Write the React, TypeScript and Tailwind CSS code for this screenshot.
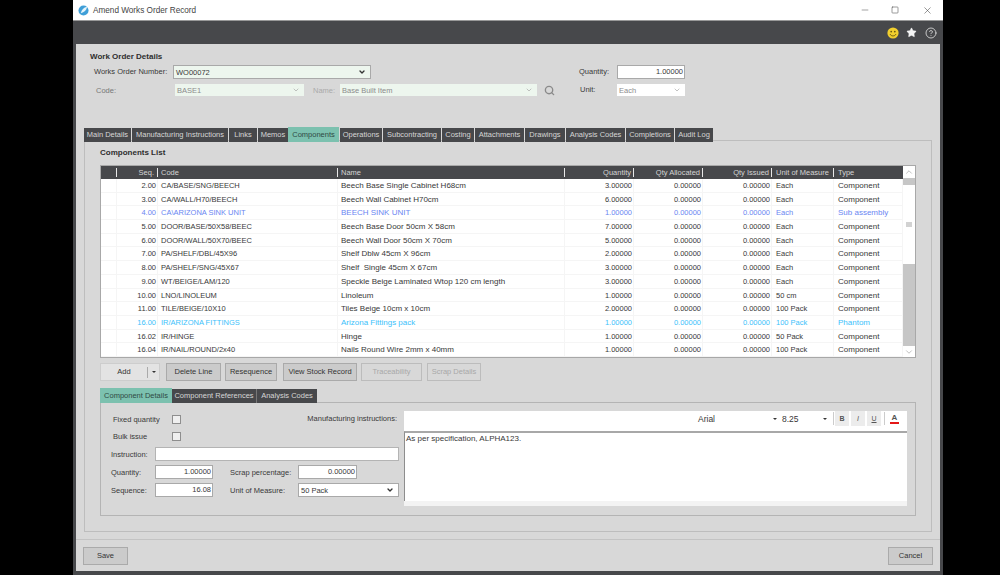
import { ChevronDown, ChevronUp, CircleHelp, Minus, Search, Square, Star, X } from "lucide-react"
import clsx from "clsx"

const topTabs = [
  { label: "Main Details", width: "w-[47px]" },
  { label: "Manufacturing Instructions", width: "w-[96px]" },
  { label: "Links", width: "w-[28px]" },
  { label: "Memos", width: "w-[30px]" },
  { label: "Components", width: "w-[51px]", active: true },
  { label: "Operations", width: "w-[42px]" },
  { label: "Subcontracting", width: "w-[58px]" },
  { label: "Costing", width: "w-[32px]" },
  { label: "Attachments", width: "w-[49px]" },
  { label: "Drawings", width: "w-[40px]" },
  { label: "Analysis Codes", width: "w-[59px]" },
  { label: "Completions", width: "w-[48px]" },
  { label: "Audit Log", width: "w-[38px]" },
]

type Row = { seq: string; code: string; name: string; qty: string; uom: string; type: string; tone?: "blue" | "cyan" }

const rows: Row[] = [
  { seq: "2.00", code: "CA/BASE/SNG/BEECH", name: "Beech Base Single Cabinet H68cm", qty: "3.00000", uom: "Each", type: "Component" },
  { seq: "3.00", code: "CA/WALL/H70/BEECH", name: "Beech Wall Cabinet H70cm", qty: "6.00000", uom: "Each", type: "Component" },
  { seq: "4.00", code: "CA\\ARIZONA SINK UNIT", name: "BEECH SINK UNIT", qty: "1.00000", uom: "Each", type: "Sub assembly", tone: "blue" },
  { seq: "5.00", code: "DOOR/BASE/50X58/BEEC", name: "Beech Base Door 50cm X 58cm", qty: "7.00000", uom: "Each", type: "Component" },
  { seq: "6.00", code: "DOOR/WALL/50X70/BEEC", name: "Beech Wall Door 50cm X 70cm", qty: "5.00000", uom: "Each", type: "Component" },
  { seq: "7.00", code: "PA/SHELF/DBL/45X96", name: "Shelf Dblw 45cm X 96cm", qty: "2.00000", uom: "Each", type: "Component" },
  { seq: "8.00", code: "PA/SHELF/SNG/45X67", name: "Shelf  Single 45cm X 67cm", qty: "3.00000", uom: "Each", type: "Component" },
  { seq: "9.00", code: "WT/BEIGE/LAM/120", name: "Speckle Beige Laminated Wtop 120 cm length", qty: "3.00000", uom: "Each", type: "Component" },
  { seq: "10.00", code: "LNO/LINOLEUM", name: "Linoleum", qty: "1.00000", uom: "50 cm", type: "Component" },
  { seq: "11.00", code: "TILE/BEIGE/10X10", name: "Tiles Beige 10cm x 10cm", qty: "2.00000", uom: "100 Pack", type: "Component" },
  { seq: "16.00", code: "IR/ARIZONA FITTINGS", name: "Arizona Fittings pack", qty: "1.00000", uom: "100 Pack", type: "Phantom", tone: "cyan" },
  { seq: "16.02", code: "IR/HINGE", name: "Hinge", qty: "1.00000", uom: "50 Pack", type: "Component" },
  { seq: "16.04", code: "IR/NAIL/ROUND/2x40", name: "Nails Round Wire 2mm x 40mm", qty: "1.00000", uom: "100 Pack", type: "Component" },
]

const gridCols = "grid grid-cols-[16px_41px_180px_227px_69px_69px_69px_62px_69px]"

function Combo({ value, width, tint, disabled }: { value: string; width: string; tint?: boolean; disabled?: boolean }) {
  return (
    <div
      className={clsx(
        "flex items-center justify-between pl-[2px] pr-[4px]",
        width,
        tint ? "bg-[#edf6ee]" : "bg-white",
        disabled ? "h-[12px] text-[#8c8c8c]" : "h-[14px] border border-[#a9a9a9]",
      )}
    >
      <span className="pt-px">{value}</span>
      <ChevronDown size={8} strokeWidth={disabled ? 2 : 4} className={disabled ? "text-[#a5a5a5]" : "text-[#333]"} />
    </div>
  )
}

function NumberBox({ value, width = "w-[58px]" }: { value: string; width?: string }) {
  return <div className={clsx("h-[14px] border border-[#a9a9a9] bg-white pr-px text-right leading-[12px]", width)}>{value}</div>
}

function ActionButton({ label, width, disabled, className }: { label: string; width: string; disabled?: boolean; className?: string }) {
  return (
    <div
      className={clsx(
        "flex h-[18px] items-center justify-center border",
        width,
        disabled ? "border-[#bcbcbc] text-[#a8a8a8]" : "border-[#aaaaaa] bg-[#cbcbcb] text-[#333]",
        className,
      )}
    >
      {label}
    </div>
  )
}

function Caret() {
  return <span className="h-0 w-0 border-x-[2px] border-t-[2px] border-x-transparent border-t-[#333]" />
}

function FormatButton({ children }: { children: React.ReactNode }) {
  return <div className="flex h-[15px] w-[14px] items-center justify-center bg-[#ececec] text-[7px] text-[#555]">{children}</div>
}

export default function App() {
  return (
    <div className="h-[575px] w-[1000px] overflow-hidden bg-black pl-[73px] font-['Liberation_Sans',Arial,sans-serif] text-[7.5px] leading-[10px] text-[#383838]">
      <div className="flex h-full w-[870px] flex-col bg-[#47484b] pb-[4px] pl-[3px] pr-[3px]">
        {/* window chrome */}
        <div className="-mx-[3px] flex h-[21px] shrink-0 items-center border-b border-[#999] bg-white pl-[5px] text-[8.2px] text-[#444]">
          <svg width="11" height="11" viewBox="0 0 12 12" className="mr-[4px]">
            <circle cx="6" cy="6" r="5.5" fill="#3f9fd8" />
            <path d="M3 9 C4 5 6 3 10 2 C9 6 7 8 3 9 Z" fill="#e6f5fb" />
          </svg>
          <span className="pt-px">Amend Works Order Record</span>
          <div className="ml-auto flex items-center text-[#444]">
            <Minus size={10} strokeWidth={1.2} className="mr-[21px]" />
            <Square size={8} strokeWidth={1.6} className="mr-[23px]" />
            <X size={11} strokeWidth={1.2} className="mr-[10px]" />
          </div>
        </div>
        <div className="flex h-[23px] shrink-0 items-center justify-end pr-[3px]">
          <svg width="12" height="12" viewBox="0 0 12 12" className="mr-[7px]">
            <circle cx="6" cy="6" r="5.6" fill="#f2cf2e" />
            <circle cx="4.2" cy="4.6" r="0.9" fill="#6b5a10" />
            <circle cx="7.8" cy="4.6" r="0.9" fill="#6b5a10" />
            <path d="M3 7 C4 9.6 8 9.6 9 7" stroke="#6b5a10" strokeWidth="0.9" fill="none" />
          </svg>
          <Star size={11} fill="#f4f4f4" strokeWidth={1} className="mr-[8px] text-[#f4f4f4]" />
          <CircleHelp size={12} strokeWidth={1.6} className="text-[#e4e4e4]" />
        </div>

        {/* form body */}
        <div className="flex min-h-0 flex-1 flex-col bg-[#d8d8d8]">
          <div className="h-[83px] shrink-0 pt-[8px]">
            <div className="ml-[14px] text-[8px] font-bold text-[#2e2e2e]">Work Order Details</div>
            <div className="mt-[3px] flex">
              <div className="w-[503px]">
                <div className="flex h-[14px] items-center pl-[18px]">
                  <span className="w-[79px]">Works Order Number:</span>
                  <Combo value="WO00072" width="w-[198px]" tint />
                </div>
                <div className="mt-[5px] flex h-[12px] items-center pl-[20px] text-[#777]">
                  <span className="w-[79px] pt-px">Code:</span>
                  <Combo value="BASE1" width="w-[129px]" tint disabled />
                  <span className="ml-[9px] w-[27px] pt-px text-[#aaa]">Name:</span>
                  <Combo value="Base Built Item" width="w-[197px]" tint disabled />
                  <Search size={11} strokeWidth={3} className="ml-[7px] text-[#8a8a8a]" />
                </div>
              </div>
              <div>
                <div className="flex h-[14px] items-center">
                  <span className="w-[38px]">Quantity:</span>
                  <NumberBox value="1.00000" width="w-[68px]" />
                </div>
                <div className="mt-[5px] flex h-[12px] items-center">
                  <span className="ml-px w-[37px]">Unit:</span>
                  <Combo value="Each" width="w-[68px]" disabled />
                </div>
              </div>
            </div>
          </div>

          {/* main tabs */}
          <div className="relative z-10 flex h-[15px] shrink-0 items-end gap-px pl-[8px]">
            {topTabs.map((tab) => (
              <div
                key={tab.label}
                className={clsx(
                  "flex items-center justify-center whitespace-nowrap",
                  tab.width,
                  tab.active ? "-ml-px h-[15px] bg-[#7cc1af] text-[#2f4a44]" : "h-[14px] bg-[#47484b] text-[#d6d6d6]",
                )}
              >
                {tab.label}
              </div>
            ))}
          </div>

          <div className="-mt-[2px] ml-[8px] mr-[8px] h-[392px] shrink-0 border border-[#bdbdbd] pl-[15px] pr-[15px]">
            <div className="mt-[7px] text-[8px] font-bold text-[#2e2e2e]">Components List</div>

            <div className="mt-[7px] flex h-[193px] w-[816px] border border-[#a8a8a8] bg-white">
              <div className="w-[802px]">
                <div className={clsx(gridCols, "h-[13px] items-center bg-[#47484b] text-[#d4d4d4]")}>
                  <span className="h-[9px] border-r border-[#e8e8e8]" />
                  <span className="flex h-[9px] items-center justify-end border-r border-[#e8e8e8] pr-[3px]">Seq.</span>
                  <span className="flex h-[9px] items-center border-r border-[#e8e8e8] pl-[3px]">Code</span>
                  <span className="flex h-[9px] items-center border-r border-[#e8e8e8] pl-[3px]">Name</span>
                  <span className="flex h-[9px] items-center justify-end border-r border-[#e8e8e8] pr-[2px]">Quantity</span>
                  <span className="flex h-[9px] items-center justify-end border-r border-[#e8e8e8] pr-[2px]">Qty Allocated</span>
                  <span className="flex h-[9px] items-center justify-end border-r border-[#e8e8e8] pr-[2px]">Qty Issued</span>
                  <span className="flex h-[9px] items-center border-r border-[#e8e8e8] pl-[4px]">Unit of Measure</span>
                  <span className="flex h-[9px] items-center pl-[4px]">Type</span>
                </div>
                {rows.map((row) => (
                  <div
                    key={row.seq}
                    className={clsx(
                      gridCols,
                      "h-[13.7px] items-stretch border-b border-[#f5f5f5] leading-[13px] [&>span]:border-r [&>span]:border-[#f5f5f5]",
                      row.tone === "blue" && "text-[#6a86f2]",
                      row.tone === "cyan" && "text-[#3cc1fb]",
                    )}
                  >
                    <span />
                    <span className="pr-px text-right">{row.seq}</span>
                    <span className="whitespace-nowrap pl-[3px]">{row.code}</span>
                    <span className="whitespace-pre pl-[3px] text-[8px]">{row.name}</span>
                    <span className="pr-px text-right">{row.qty}</span>
                    <span className="pr-px text-right">0.00000</span>
                    <span className="pr-px text-right">0.00000</span>
                    <span className="pl-[4px]">{row.uom}</span>
                    <span className="pl-[4px] text-[8px]">{row.type}</span>
                  </div>
                ))}
              </div>
              {/* scrollbar */}
              <div className="flex w-[12px] flex-col bg-[#c6c6c6]">
                <div className="flex h-[12px] items-center justify-center bg-white">
                  <ChevronUp size={10} strokeWidth={1.6} className="text-[#a0a0a0]" />
                </div>
                <div className="mt-[7px] flex h-[79px] items-center justify-center bg-white">
                  <span className="h-[5px] w-[6px] bg-[#d2d2d2]" />
                </div>
                <div className="mt-auto flex h-[11px] items-center justify-center bg-white">
                  <ChevronDown size={10} strokeWidth={1.6} className="text-[#a0a0a0]" />
                </div>
              </div>
            </div>

            {/* grid actions */}
            <div className="mt-[5px] flex h-[18px] items-center">
              <div className="flex h-[18px] w-[60px] items-center border border-[#cdcdcd] bg-[#e3e3e3] text-[#333]">
                <span className="w-[46px] text-center">Add</span>
                <span className="flex h-[11px] flex-1 items-center justify-center border-l border-[#aaa]">
                  <Caret />
                </span>
              </div>
              <ActionButton label="Delete Line" width="w-[55px]" className="ml-[6px]" />
              <ActionButton label="Resequence" width="w-[52px]" className="ml-[4px]" />
              <ActionButton label="View Stock Record" width="w-[74px]" className="ml-[6px]" />
              <ActionButton label="Traceability" width="w-[61px]" disabled className="ml-[4px]" />
              <ActionButton label="Scrap Details" width="w-[54px]" disabled className="ml-[5px]" />
            </div>

            {/* detail tabs */}
            <div className="relative z-10 mt-[7px] flex h-[15px] items-end whitespace-nowrap">
              <div className="flex h-[15px] w-[72px] items-center justify-center bg-[#7cc1af] text-[#2f4a44]">Component Details</div>
              <div className="flex h-[14px] w-[85px] items-center justify-center border-r border-[#777] bg-[#47484b] text-[#d6d6d6]">Component References</div>
              <div className="flex h-[14px] w-[60px] items-center justify-center bg-[#47484b] text-[#d6d6d6]">Analysis Codes</div>
            </div>

            <div className="-mt-px flex h-[114px] w-[816px] border border-[#b4b4b4]">
              <div className="w-[303px] shrink-0 pl-[10px]">
                <div className="mt-[12px] flex h-[9px] items-center pl-[2px] pr-[7px]">
                  <span className="w-[59px]">Fixed quantity</span>
                  <span className="h-[9px] w-[9px] border border-[#8e8e8e] bg-[#efefef]" />
                  <span className="mb-[2px] ml-auto whitespace-nowrap">Manufacturing instructions:</span>
                </div>
                <div className="mt-[8px] flex h-[9px] items-center pl-[2px]">
                  <span className="w-[59px]">Bulk issue</span>
                  <span className="h-[9px] w-[9px] border border-[#8e8e8e] bg-[#efefef]" />
                </div>
                <div className="mt-[6px] flex h-[14px] items-center">
                  <span className="w-[44px] pt-px">Instruction:</span>
                  <div className="h-[14px] w-[244px] border border-[#b4b4b4] bg-white" />
                </div>
                <div className="mt-[4px] flex h-[14px] items-center">
                  <span className="w-[44px] pt-px">Quantity:</span>
                  <NumberBox value="1.00000" />
                  <span className="ml-[17px] w-[68px] pt-px">Scrap percentage:</span>
                  <NumberBox value="0.00000" width="w-[59px]" />
                </div>
                <div className="mt-[4px] flex h-[14px] items-center">
                  <span className="w-[44px] pt-px">Sequence:</span>
                  <NumberBox value="16.08" />
                  <span className="ml-[17px] w-[68px] pt-px">Unit of Measure:</span>
                  <Combo value="50 Pack" width="w-[101px]" />
                </div>
              </div>
              <div className="mt-[8px] w-[503px] shrink-0">
                <div className="flex h-[20px] items-start bg-white">
                  <div className="flex h-[15px] flex-1 items-center">
                    <span className="ml-[294px] w-[75px] text-[8.5px]">Arial</span>
                    <Caret />
                    <span className="ml-[5px] w-[41px] text-[8.5px]">8.25</span>
                    <Caret />
                    <span className="ml-[6px] h-[13px] border-l border-[#ccc]" />
                    <div className="ml-[1px] flex gap-[2px]">
                      <FormatButton><b>B</b></FormatButton>
                      <FormatButton><i>I</i></FormatButton>
                      <FormatButton><u>U</u></FormatButton>
                    </div>
                    <span className="ml-[3px] h-[13px] border-l border-[#ccc]" />
                    <div className="ml-[5px] flex flex-col items-center text-[8px] font-bold leading-[7px] text-[#555]">
                      A
                      <span className="mt-px h-[2px] w-[9px] bg-[#e41818]" />
                    </div>
                  </div>
                </div>
                <div className="h-[70px] border-l border-t-2 border-[#8d8d8d] border-t-[#a8a8a8] bg-white pl-px pt-px text-[8px]">As per specification, ALPHA123.</div>
                <div className="h-[5px] bg-[#f3f3f3]" />
              </div>
            </div>
          </div>

          {/* footer */}
          <div className="mt-[7px] flex flex-1 items-start justify-between border-t border-[#c3c3c3] pl-[7px] pr-[7px] pt-[7px]">
            <ActionButton label="Save" width="w-[45px]" />
            <ActionButton label="Cancel" width="w-[45px]" />
          </div>
        </div>
      </div>
    </div>
  )
}
